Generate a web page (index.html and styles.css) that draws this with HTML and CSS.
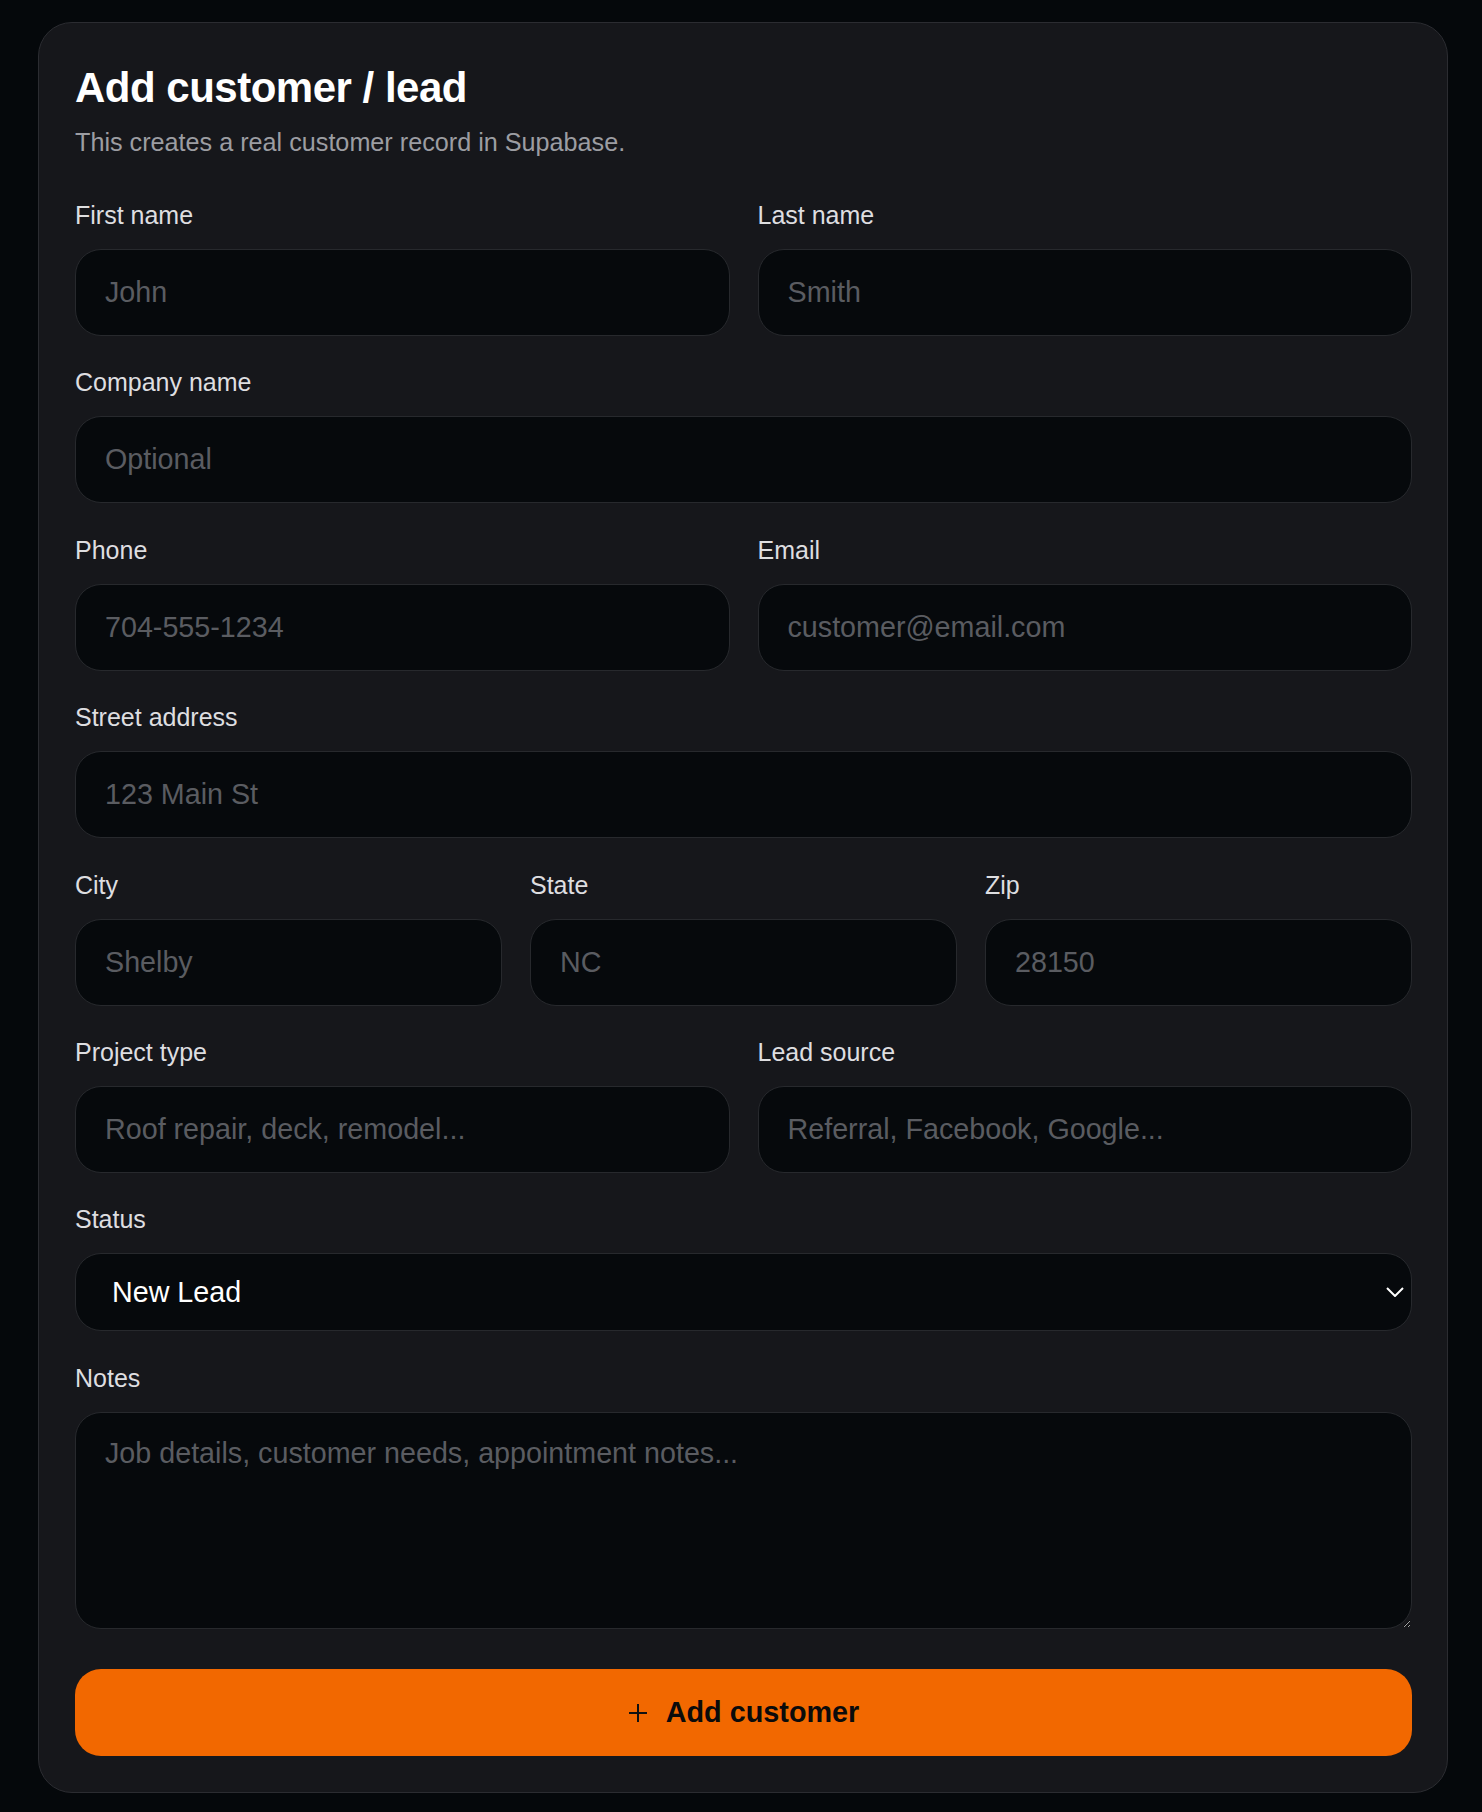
FILE: index.html
```html
<!DOCTYPE html>
<html lang="en">
<head>
<meta charset="UTF-8" />
<meta name="viewport" content="width=device-width, initial-scale=1" />
<title>Add customer / lead</title>
<link rel="stylesheet" href="styles.css">
</head>
<body>
<div class="card">
  <h1 class="card-title">Add customer / lead</h1>
  <p class="card-sub">This creates a real customer record in Supabase.</p>

  <form class="lead-form" id="leadForm">
    <div class="row two">
      <label class="field">
        <span class="field-label">First name</span>
        <input type="text" name="first_name" placeholder="John" />
      </label>
      <label class="field">
        <span class="field-label">Last name</span>
        <input type="text" name="last_name" placeholder="Smith" />
      </label>
    </div>

    <label class="field">
      <span class="field-label">Company name</span>
      <input type="text" name="company" placeholder="Optional" />
    </label>

    <div class="row two">
      <label class="field">
        <span class="field-label">Phone</span>
        <input type="tel" name="phone" placeholder="704-555-1234" />
      </label>
      <label class="field">
        <span class="field-label">Email</span>
        <input type="email" name="email" placeholder="customer@email.com" />
      </label>
    </div>

    <label class="field">
      <span class="field-label">Street address</span>
      <input type="text" name="street" placeholder="123 Main St" />
    </label>

    <div class="row three">
      <label class="field">
        <span class="field-label">City</span>
        <input type="text" name="city" placeholder="Shelby" />
      </label>
      <label class="field">
        <span class="field-label">State</span>
        <input type="text" name="state" placeholder="NC" />
      </label>
      <label class="field">
        <span class="field-label">Zip</span>
        <input type="text" name="zip" placeholder="28150" />
      </label>
    </div>

    <div class="row two">
      <label class="field">
        <span class="field-label">Project type</span>
        <input type="text" name="project_type" placeholder="Roof repair, deck, remodel..." />
      </label>
      <label class="field">
        <span class="field-label">Lead source</span>
        <input type="text" name="lead_source" placeholder="Referral, Facebook, Google..." />
      </label>
    </div>

    <label class="field">
      <span class="field-label">Status</span>
      <span class="select-wrap">
        <select name="status">
          <option>New Lead</option>
          <option>Contacted</option>
          <option>Estimate Sent</option>
          <option>Won</option>
          <option>Lost</option>
        </select>
        <svg class="select-arrow" width="18" height="10" viewBox="0 0 18 10" fill="none">
          <polyline points="1,1 9,9 17,1" stroke="#fff" stroke-width="2" />
        </svg>
      </span>
    </label>

    <label class="field">
      <span class="field-label">Notes</span>
      <textarea name="notes" placeholder="Job details, customer needs, appointment notes..."></textarea>
    </label>

    <button type="submit" class="submit-btn">
      <svg width="20" height="20" viewBox="0 0 20 20" fill="none">
        <path d="M10 1v18M1 10h18" stroke="#111" stroke-width="2" />
      </svg>
      <span>Add customer</span>
    </button>
  </form>
</div>

<script>
  // Just stop the page from reloading for now
  document.getElementById('leadForm').addEventListener('submit', (e) => {
    e.preventDefault();
  });
</script>
</body>
</html>
```

FILE: styles.css
```css
/* Basic reset */
* {
  box-sizing: border-box;
}

html, body {
  margin: 0;
  background: #05080b;
  font-family: "Liberation Sans", Arial, sans-serif;
}

body {
  padding: 22px 34px 14px 38px;
}

/* Card holding the whole form */
.card {
  background: #16171b;
  border: 1px solid #2b2c31;
  border-radius: 34px;
  padding: 41px 35px 36px 36px;
}

.card-title {
  margin: 0;
  font-size: 42px;
  line-height: 48px;
  letter-spacing: -0.5px;
  font-weight: 700;
  color: #fff;
}

.card-sub {
  margin: 16px 0 0;
  font-size: 25.2px;
  line-height: 29px;
  color: #9c9da2;
}

/* Form layout */
.lead-form {
  margin-top: 44px;
  display: flex;
  flex-direction: column;
  gap: 32.4px;
}

.row {
  display: grid;
  gap: 28px;
}

.row.two {
  grid-template-columns: 1fr 1fr;
}

.row.three {
  grid-template-columns: 1fr 1fr 1fr;
}

.field {
  display: flex;
  flex-direction: column;
  gap: 19px;
}

.field-label {
  font-size: 25px;
  line-height: 29px;
  color: #dedee0;
}

/* Inputs */
.field input,
.field select,
.field textarea {
  width: 100%;
  background: #06090c;
  border: 1px solid #27292d;
  border-radius: 26px;
  color: #fff;
  font-family: inherit;
  font-size: 28.7px;
  outline: none;
}

.field input {
  height: 87px;
  padding: 0 29px;
}

.field input::placeholder,
.field textarea::placeholder {
  color: #5a5c61;
}

.select-wrap {
  position: relative;
  display: block;
}

.field select {
  appearance: none;
  -webkit-appearance: none;
  display: block;
  height: 78px;
  padding: 0 40px 0 36px;
  cursor: pointer;
}

.select-arrow {
  position: absolute;
  right: 8px;
  top: 34px;
  pointer-events: none;
}

.field textarea {
  display: block;
  height: 217px;
  padding: 24px 29px;
  resize: vertical;
  color-scheme: dark;
}

/* Submit button */
.submit-btn {
  margin-top: 8px;
  height: 87px;
  border: none;
  border-radius: 26px;
  background: #f26800;
  color: #0b0b0b;
  font-family: inherit;
  font-size: 28.8px;
  font-weight: 700;
  display: flex;
  align-items: center;
  justify-content: center;
  gap: 18px;
  cursor: pointer;
}

.submit-btn:hover {
  background: #ff7a14;
}
```
